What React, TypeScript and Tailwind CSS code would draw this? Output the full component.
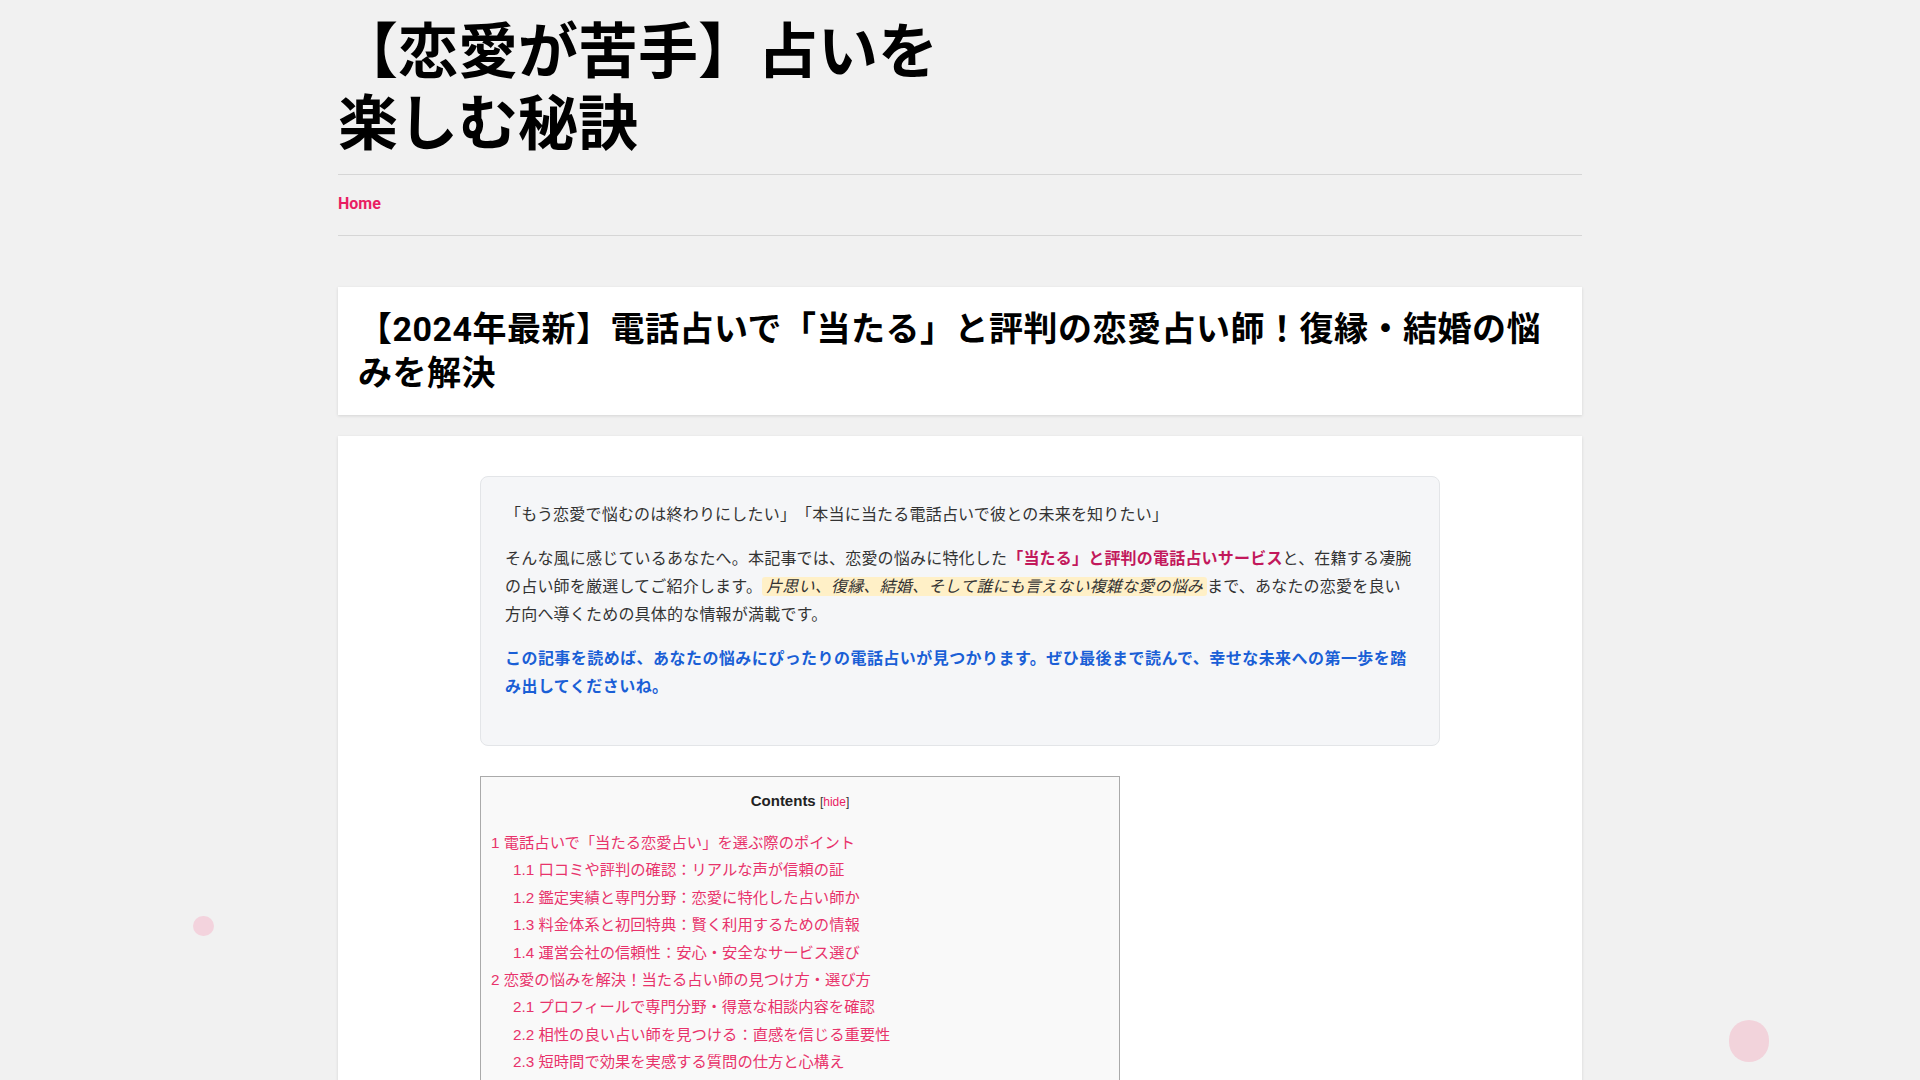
const jp = "font-['Roboto','Noto_Sans_CJK_JP',sans-serif]";
const toc = "font-['Liberation_Sans','Noto_Sans_CJK_JP',sans-serif]";

const tocItems: { n: string; t: string; sub?: boolean }[] = [
  { n: "1", t: "電話占いで「当たる恋愛占い」を選ぶ際のポイント" },
  { n: "1.1", t: "口コミや評判の確認：リアルな声が信頼の証", sub: true },
  { n: "1.2", t: "鑑定実績と専門分野：恋愛に特化した占い師か", sub: true },
  { n: "1.3", t: "料金体系と初回特典：賢く利用するための情報", sub: true },
  { n: "1.4", t: "運営会社の信頼性：安心・安全なサービス選び", sub: true },
  { n: "2", t: "恋愛の悩みを解決！当たる占い師の見つけ方・選び方" },
  { n: "2.1", t: "プロフィールで専門分野・得意な相談内容を確認", sub: true },
  { n: "2.2", t: "相性の良い占い師を見つける：直感を信じる重要性", sub: true },
  { n: "2.3", t: "短時間で効果を実感する質問の仕方と心構え", sub: true },
  { n: "2.4", t: "複数の占い師に相談してみるメリット", sub: true },
];

export default function App() {
  return (
    <div className={`relative min-h-screen bg-[#f1f1f1] text-[#333] [text-spacing-trim:space-all] ${jp}`}>
      {/* floating dots */}
      <div className="absolute left-[193px] top-[916px] h-[20px] w-[21px] rounded-full bg-[#f3d3dd]" />
      <div className="absolute left-[1729px] top-[1020px] h-[42px] w-[40px] rounded-full bg-[#f2d3db]" />

      <div className="mx-auto w-[1244px]">
        {/* header */}
        <header className="pt-[17px]">
          <h1 className="max-w-[640px] pb-[13px] text-[60px] font-bold leading-[72px] text-black">
            【恋愛が苦手】占いを楽しむ秘訣
          </h1>
          <nav className="flex h-[62px] items-center border-y border-[#d6d6d6]">
            <a className="-mt-[2px] text-[16px] font-bold text-[#e91e63]">Home</a>
          </nav>
        </header>

        <main className="pt-[51px]">
          <div className="bg-white px-5 py-5 shadow-[0_1px_3px_rgba(0,0,0,0.12)]">
            <h2 className="text-[34px] font-bold leading-[44px] tracking-[0.5px] text-black">
              【2024年最新】電話占いで「当たる」と評判の恋愛占い師！復縁・結婚の悩みを解決
            </h2>
          </div>

          <article className="mt-[21px] h-[700px] bg-white pt-[40px] shadow-[0_1px_3px_rgba(0,0,0,0.12)]">
            <div className="mx-auto w-[960px]">
              <div className="rounded-[8px] border border-[#e3e5e8] bg-[#f5f6f8] px-6 pt-6 pb-7 text-[16px] leading-[28px] tracking-[0.2px]">
                <p className="mb-4">「もう恋愛で悩むのは終わりにしたい」「本当に当たる電話占いで彼との未来を知りたい」</p>
                <p className="mb-4">
                  そんな風に感じているあなたへ。本記事では、恋愛の悩みに特化した
                  <strong className="font-bold text-[#c2185b]">「当たる」と評判の電話占いサービス</strong>
                  と、在籍する凄腕の占い師を厳選してご紹介します。
                  <em className="rounded-[3px] bg-[#fff0c7] px-[4px] italic">片思い、復縁、結婚、そして誰にも言えない複雑な愛の悩み</em>
                  まで、あなたの恋愛を良い方向へ導くための具体的な情報が満載です。
                </p>
                <p className="mb-4 font-bold tracking-[0.45px] text-[#1a5fd6]">
                  この記事を読めば、あなたの悩みにぴったりの電話占いが見つかります。ぜひ最後まで読んで、幸せな未来への第一歩を踏み出してくださいね。
                </p>
              </div>

              <div className={`mt-[30px] w-[640px] border border-[#aaa] bg-[#f9f9f9] px-[10px] pt-[11px] pb-3 ${toc}`}>
                <div className="text-center text-[15px] leading-[26px]">
                  <span className="font-bold text-[#222]">Contents</span>{" "}
                  <span className="text-[12px] text-[#333]">
                    [<a className="text-[#e91e63]">hide</a>]
                  </span>
                </div>
                <ul className="mt-[14px]">
                  {tocItems.map((it) => (
                    <li
                      key={it.n}
                      className={`text-[15.3px] leading-[27.4px] text-[#e8336b] ${it.sub ? "pl-[22px]" : ""}`}
                    >
                      {it.n} {it.t}
                    </li>
                  ))}
                </ul>
              </div>
            </div>
          </article>
        </main>
      </div>
    </div>
  );
}
